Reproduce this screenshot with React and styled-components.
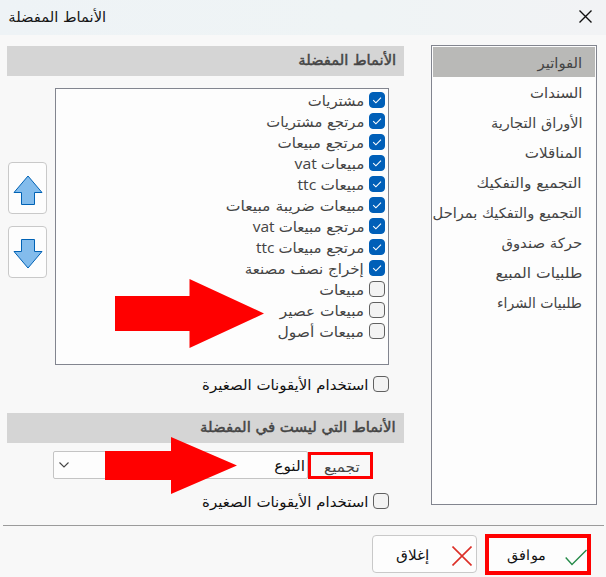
import styled, { createGlobalStyle } from 'styled-components';

const GlobalStyle = createGlobalStyle`
    * {
        box-sizing: border-box;
    }

    body {
        margin: 0;
        overflow: hidden;
        background-color: #f8f8f8;
        font-family: 'DejaVu Sans', 'Noto Sans', sans-serif;
    }
`;

const categories = [
    { label: 'الفواتير', scale: 1.06 },
    { label: 'السندات', scale: 1.06 },
    { label: 'الأوراق التجارية', scale: 1.035 },
    { label: 'المناقلات', scale: 1.08 },
    { label: 'التجميع والتفكيك', scale: 1.1 },
    { label: 'التجميع والتفكيك بمراحل', scale: 1.045 },
    { label: 'حركة صندوق', scale: 1.06 },
    { label: 'طلبيات المبيع', scale: 1.11 },
    { label: 'طلبيات الشراء', scale: 1 },
];

const patterns = [
    { label: 'مشتريات', scale: 1.06, checked: true },
    { label: 'مرتجع مشتريات', scale: 1.05, checked: true },
    { label: 'مرتجع مبيعات', scale: 1.08, checked: true },
    { label: 'مبيعات', latin: 'vat', scale: 1.085, checked: true },
    { label: 'مبيعات', latin: 'ttc', scale: 1.09, checked: true },
    { label: 'مبيعات ضريبة مبيعات', scale: 1.115, checked: true },
    { label: 'مرتجع مبيعات', latin: 'vat', scale: 1.07, checked: true },
    { label: 'مرتجع مبيعات', latin: 'ttc', scale: 1.07, checked: true },
    { label: 'إخراج نصف مصنعة', scale: 1.075, checked: true },
    { label: 'مبيعات', scale: 1.12, checked: false },
    { label: 'مبيعات عصير', scale: 1.095, checked: false },
    { label: 'مبيعات أصول', scale: 1.11, checked: false },
];

function CheckBox({ checked }) {
    return (
        <Box $checked={checked}>
            {checked && (
                <svg width="16" height="16" viewBox="0 0 16 16" fill="none">
                    <path d="M4.2 8.2 L6.9 10.8 L12 5.7" stroke="#fff" strokeWidth="1.1" />
                </svg>
            )}
        </Box>
    );
}

function App() {
    return (
        <Dialog>
            <GlobalStyle />
            <TitleBar>
                <svg width="13" height="13" viewBox="0 0 13 13">
                    <path d="M0.5 0.5 L12.5 12.5 M12.5 0.5 L0.5 12.5" stroke="#111" strokeWidth="1.4" />
                </svg>
                <Label $color="#151515" $scale={1.05}>الأنماط المفضلة</Label>
            </TitleBar>

            <Content>
                <CategoryList>
                    {categories.map((item, index) => (
                        <Category key={item.label} $selected={index === 0}>
                            <Label $scale={item.scale}>{item.label}</Label>
                        </Category>
                    ))}
                </CategoryList>

                <Settings>
                    <SectionTitle>
                        <Label $medium $scale={1.05}>الأنماط المفضلة</Label>
                    </SectionTitle>
                    <Favorites>
                        <PatternList>
                            {patterns.map((item) => (
                                <Pattern key={item.label + item.latin}>
                                    <CheckBox checked={item.checked} />
                                    <Label $scale={item.scale}>
                                        {item.label}
                                        {item.latin && <Latin> {item.latin}</Latin>}
                                    </Label>
                                </Pattern>
                            ))}
                        </PatternList>
                        <MoveButtons>
                            <MoveButton>
                                <svg width="30" height="31" viewBox="0 0 30 31">
                                    <path d="M15 1 L29 17.5 H21.5 V29.5 H8.5 V17.5 H1 Z" fill="#83bcec" stroke="#0062b5" />
                                </svg>
                            </MoveButton>
                            <MoveButton>
                                <svg width="30" height="31" viewBox="0 0 30 31">
                                    <path d="M8.5 0.5 H21.5 V12.5 H29 L15 29 L1 12.5 H8.5 Z" fill="#83bcec" stroke="#0062b5" />
                                </svg>
                            </MoveButton>
                        </MoveButtons>
                    </Favorites>
                    <Option>
                        <CheckBox />
                        <Label $color="#111" $scale={1.07}>استخدام الأيقونات الصغيرة</Label>
                    </Option>

                    <SectionTitle>
                        <Label $medium $scale={1.065}>الأنماط التي ليست في المفضلة</Label>
                    </SectionTitle>
                    <Grouping>
                        <GroupLabel>
                            <Label $scale={1.09}>تجميع</Label>
                        </GroupLabel>
                        <Combo>
                            <Label $color="#111" $scale={1.1}>النوع</Label>
                            <svg width="10" height="6" viewBox="0 0 10 6" fill="none">
                                <path d="M0.5 0.5 L5 5 L9.5 0.5" stroke="#444" strokeWidth="1.1" />
                            </svg>
                        </Combo>
                    </Grouping>
                    <Option>
                        <CheckBox />
                        <Label $color="#111" $scale={1.07}>استخدام الأيقونات الصغيرة</Label>
                    </Option>
                </Settings>
            </Content>

            <Footer>
                <OkButton>
                    <svg width="22" height="17" viewBox="0 0 22 17" fill="none">
                        <path d="M0.7 8.5 L7 15.5 L21.5 1" stroke="#258a49" strokeWidth="1.4" />
                    </svg>
                    <Label $color="#111" $scale={1.03}>موافق</Label>
                </OkButton>
                <CloseButton>
                    <svg width="20" height="20" viewBox="0 0 20 20">
                        <path d="M0.5 0.5 L19.5 19.5 M19.5 0.5 L0.5 19.5" stroke="#dc3028" strokeWidth="1.6" />
                    </svg>
                    <Label $color="#111" $scale={1.1}>إغلاق</Label>
                </CloseButton>
            </Footer>

            <Pointer $left={115} $top={279} width="149" height="69" viewBox="0 0 149 69">
                <path d="M0 17 H74.5 V0 L149 34.5 L74.5 69 V52 H0 Z" fill="#ff0000" />
            </Pointer>
            <Pointer $left={105} $top={437} width="132" height="57" viewBox="0 0 132 57">
                <path d="M0 14 H66 V0 L132 28.5 L66 57 V43 H0 Z" fill="#ff0000" />
            </Pointer>
        </Dialog>
    );
}

const Dialog = styled.div`
    position: relative;
    display: flex;
    flex-direction: column;
    direction: rtl;
    width: 606px;
    height: 577px;
    background-color: #f8f8f8;
`;

const Label = styled.span`
    display: block;
    flex: none;
    white-space: nowrap;
    font-size: 14px;
    line-height: 20px;
    color: ${(props) => props.$color || '#444'};
    -webkit-text-stroke: ${(props) => (props.$medium ? '0.45px #444' : '0')};
    transform: scaleX(${(props) => props.$scale || 1});
    transform-origin: right center;
`;

const Latin = styled.span`
    font-family: 'Open Sans', sans-serif;
    font-size: 14.5px;
    line-height: 1;
`;

const TitleBar = styled.header`
    display: flex;
    align-items: center;
    justify-content: space-between;
    height: 35px;
    padding: 0 14px 2px 13px;
    background: linear-gradient(90deg, #eef3f6, #eff4f5 60%, #f2f3f5);
`;

const Content = styled.main`
    display: flex;
    gap: 27px;
    height: 490px;
    padding: 10px 9px 0 7px;
`;

const CategoryList = styled.ul`
    width: 166px;
    height: 460px;
    margin: 0;
    padding: 1px;
    list-style: none;
    overflow: hidden;
    border: 1px solid #82858f;
    background-color: #fdfdfd;
`;

const Category = styled.li`
    display: flex;
    align-items: center;
    height: 30px;
    padding: 2px 13px 0 0;
    background-color: ${(props) => (props.$selected ? '#b9b9b7' : 'transparent')};
`;

const Settings = styled.section`
    width: 397px;
`;

const SectionTitle = styled.div`
    display: flex;
    align-items: center;
    height: 30px;
    padding: 0 8px 2px;
    margin-top: 1px;
    background-color: #d5d5d5;
`;

const Favorites = styled.div`
    display: flex;
    gap: 8px;
    padding: 12px 15px 0 0;
`;

const PatternList = styled.ul`
    width: 334px;
    height: 277px;
    margin: 0;
    padding: 3px;
    list-style: none;
    border: 1px solid #82858f;
    background-color: #fdfdfd;
`;

const Pattern = styled.li`
    display: flex;
    align-items: flex-start;
    gap: 5px;
    height: 21px;

    ${Label} {
        margin-top: -1px;
    }
`;

const Box = styled.span`
    display: block;
    flex: none;
    width: 16px;
    height: 16px;
    border: 1px solid ${(props) => (props.$checked ? '#005fb8' : '#606060')};
    border-radius: 4px;
    background-color: ${(props) => (props.$checked ? '#005fb8' : '#f3f3f3')};

    svg {
        display: block;
        margin: -1px;
    }
`;

const MoveButtons = styled.div`
    display: flex;
    flex-direction: column;
    gap: 12px;
    padding-top: 74px;
`;

const MoveButton = styled.button`
    display: flex;
    align-items: center;
    justify-content: center;
    width: 39px;
    height: 52px;
    padding: 4px 0 0;
    border: 1px solid #c9c9c9;
    border-radius: 4px;
    background-color: #fdfdfd;
`;

const Option = styled.div`
    display: flex;
    align-items: flex-start;
    gap: 5px;
    height: 16px;
    margin: 11px 15px 21px 0;

    ${Label} {
        margin-top: -1px;
    }
`;

const Grouping = styled.div`
    display: flex;
    align-items: flex-start;
    height: 39px;
    padding: 8px 31px 0 0;
`;

const GroupLabel = styled.div`
    display: flex;
    align-items: center;
    width: 65px;
    height: 27px;
    margin-top: 1px;
    padding: 2px 10px 0 0;
    border: 3px solid #ff0000;
`;

const Combo = styled.div`
    display: flex;
    align-items: center;
    justify-content: space-between;
    width: 255px;
    height: 28px;
    padding: 0 2px 0 5px;
    border: 1px solid #c4c4c4;
    border-radius: 2px;
    background-color: #fdfdfd;

    ${Label} {
        padding-top: 1px;
    }
`;

const Footer = styled.footer`
    display: flex;
    gap: 8px;
    align-items: flex-start;
    height: 52px;
    margin: 0 2px 0 3px;
    padding: 8px 13px 0 0;
    border-top: 1px solid #9b9b9b;
`;

const OkButton = styled.button`
    display: flex;
    align-items: center;
    gap: 19px;
    width: 106px;
    height: 41px;
    padding: 0;
    border: 4px solid #ff0000;
    background-color: #fdfdfd;

    svg {
        margin-top: 5px;
    }
`;

const CloseButton = styled.button`
    display: flex;
    align-items: center;
    gap: 23px;
    width: 105px;
    height: 38px;
    margin-top: 1px;
    padding: 0 4px;
    border: 1px solid #c9c9c9;
    border-radius: 4px;
    background-color: #fdfdfd;

    svg {
        margin-top: 4px;
    }

    ${Label} {
        padding-top: 1px;
    }
`;

const Pointer = styled.svg`
    position: absolute;
    left: ${(props) => props.$left}px;
    top: ${(props) => props.$top}px;
`;

export default App;
